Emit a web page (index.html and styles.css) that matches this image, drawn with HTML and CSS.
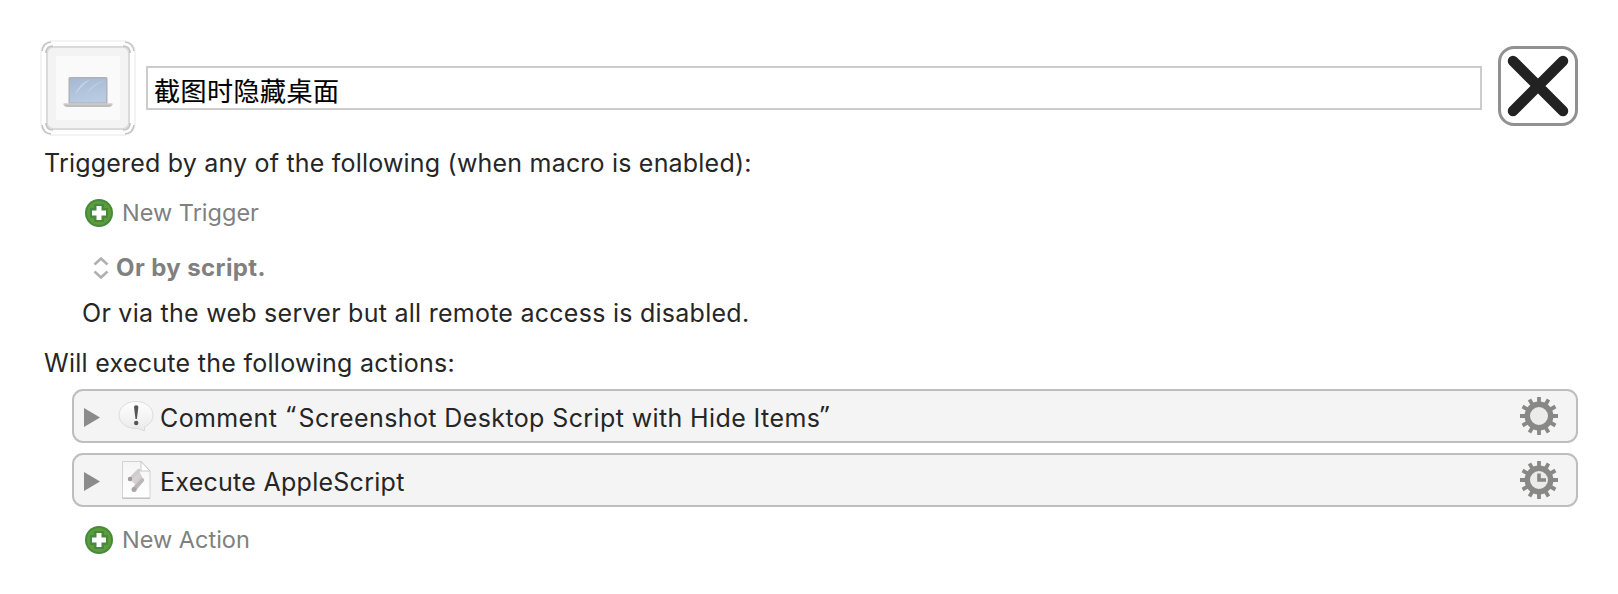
FILE: index.html
```
<!DOCTYPE html>
<html lang="zh-CN">
<head>
<meta charset="utf-8">
<title>Macro Editor</title>
<link rel="stylesheet" href="styles.css">
</head>
<body>
<svg width="0" height="0" class="defs" aria-hidden="true">
  <defs>
    <linearGradient id="screen" x1="0" y1="0" x2="0.3" y2="1"><stop offset="0" stop-color="#a7b8d2"/><stop offset="1" stop-color="#b9cbe2"/></linearGradient>
    <linearGradient id="bubble" x1="0" y1="0" x2="0" y2="1"><stop offset="0" stop-color="#fff"/><stop offset="1" stop-color="#eaeaea"/></linearGradient>
    <linearGradient id="page" x1="0" y1="0" x2="0" y2="1"><stop offset="0" stop-color="#f5f5f5"/><stop offset="1" stop-color="#fff"/></linearGradient>
    <linearGradient id="scroll" x1="0" y1="0" x2="1" y2="1"><stop offset="0" stop-color="#e6e2e3"/><stop offset="1" stop-color="#c2bdbf"/></linearGradient>
    <symbol id="plus" viewBox="0 0 28 28">
      <circle cx="14" cy="14" r="14" fill="#478a3b"/>
      <circle cx="14" cy="14" r="12" fill="#5b9d3d"/>
      <path d="M9 5h10v4h4v10h-4v4H9v-4H5V9h4z" fill="#478a3b"/>
      <path d="M11.500 7h5v4.500h4.500v5h-4.500V21h-5v-4.500H7v-5h4.500z" fill="#fff"/>
    </symbol>
    <symbol id="gear" viewBox="-19 -19 38 38">
      <g stroke="#888987" stroke-width="3.800">
        <path d="M0-19V-10M0 19V10M-19 0H-10M19 0H10"/>
        <path d="M0-19V-10M0 19V10M-19 0H-10M19 0H10" transform="rotate(30)"/>
        <path d="M0-19V-10M0 19V10M-19 0H-10M19 0H10" transform="rotate(60)"/>
      </g>
      <circle r="11.700" fill="#ebebeb" stroke="#888987" stroke-width="5.400"/>
    </symbol>
    <g id="corner" fill="none" stroke-width="1.700" stroke="#c4c4c4">
      <path d="M2 11Q3 3 11 2"/>
      <path d="M6 13Q6 6 13 6"/>
    </g>
  </defs>
</svg>
<main class="editor">
  <header class="header">
    <svg width="96" height="96" viewBox="0 0 96 96">
      <rect x="1" y="1" width="94" height="94" rx="12" fill="#fff" stroke="#f3f3f3" stroke-width="2"/>
      <rect x="7" y="7" width="82" height="82" rx="6" fill="#f3f3f3" stroke="#dadada" stroke-width="2"/>
      <rect x="16" y="16" width="64" height="64" fill="#fafafa"/>
      <use href="#corner"/>
      <use href="#corner" transform="translate(96 0) scale(-1 1)"/>
      <use href="#corner" transform="translate(0 96) scale(1 -1)"/>
      <use href="#corner" transform="translate(96 96) scale(-1 -1)"/>
      <g transform="translate(23 36)">
        <rect x="5.500" y="1" width="39" height="27" rx="1.500" fill="#aeb1b5"/>
        <rect x="7" y="2.500" width="36" height="24" fill="url(#screen)"/>
        <path d="M12 19Q16 7 28 3Q18 10 12 19zM24 17Q29 8 42 4Q31 9 24 17z" fill="#d0dbea" opacity=".7"/>
        <path d="M0.500 27.500h49v1q-1 2.500-4 2.500h-41q-3 0-4-2.500z" fill="#bcbcbc"/>
        <path d="M1 27.500h48v1H1z" fill="#d6d6d6"/>
      </g>
    </svg>
    <div class="name-field">截图时隐藏桌面</div>
    <div class="close">
      <svg width="74" height="74" viewBox="0 0 74 74"><path d="M12 12L62 62M62 12L12 62" stroke="#222" stroke-width="10.500" stroke-linecap="round"/></svg>
    </div>
  </header>
  <section class="triggers">
    <div class="label t-trig">Triggered by any of the following (when macro is enabled):</div>
    <div class="add-row">
      <svg width="28" height="28"><use href="#plus"/></svg>
      <span class="add-text">New Trigger</span>
    </div>
    <div class="script-row">
      <svg width="16" height="24" viewBox="0 0 16 24" fill="none" stroke="#b0b0b0" stroke-width="2.600"><path d="M1.500 8.500L8 2.500L14.500 8.500M1.500 15.500L8 21.500L14.500 15.500"/></svg>
      <span class="script-text">Or by script.</span>
    </div>
    <div class="label web">Or via the web server but all remote access is disabled.</div>
  </section>
  <section class="actions">
    <div class="label t-will">Will execute the following actions:</div>
    <div class="action">
      <svg class="disclosure" width="16" height="19" viewBox="0 0 16 19"><path d="M0 0L16 9.500L0 19z" fill="#8b8b8b"/></svg>
      <svg class="kind" width="36" height="38" viewBox="0 0 36 38">
        <path d="M18 4.500C27.500 4.500 35 10.500 35 18C35 23 32 27.500 26.500 29.700L26.500 34L20 31.400C9 32.300 1 26 1 18C1 10.500 8.500 4.500 18 4.500z" fill="url(#bubble)" stroke="#dcdcdc" stroke-width="1"/>
        <path d="M16 10Q16 8.300 18.200 8.300Q20.400 8.300 20.400 10L18.900 22H17.500z" fill="#555"/>
        <circle cx="18.200" cy="26" r="2.200" fill="#555"/>
      </svg>
      <span class="action-title c-title">Comment <span class="quote open">“</span>Screenshot Desktop Script with Hide Items<span class="quote">”</span></span>
      <svg class="gear" width="38" height="38"><use href="#gear"/></svg>
    </div>
    <div class="action">
      <svg class="disclosure" width="16" height="19" viewBox="0 0 16 19"><path d="M0 0L16 9.500L0 19z" fill="#8b8b8b"/></svg>
      <svg class="kind" width="36" height="38" viewBox="0 0 36 38">
        <path d="M4.500 0.500H23L32 10V37.200H4.500z" fill="url(#page)" stroke="#d2d2d2"/>
        <path d="M4.500 37.200H32" stroke="#b4b4b4"/>
        <path d="M23 0.500V10H32z" fill="#fff" stroke="#bbb" stroke-width=".8"/>
        <path d="M12 16L20.500 7.500Q23 7.500 21.500 11L26 19.500L18 30L14.500 28L17 23L13 20z" fill="url(#scroll)"/>
        <path d="M12.500 18L21 9.500" stroke="#d0cccd" stroke-width="3.500" stroke-linecap="round"/>
        <path d="M16.500 27.500L24.500 19" stroke="#bbb6b8" stroke-width="3.500" stroke-linecap="round"/>
        <circle cx="12" cy="18" r="2.200" fill="#9f999b"/><circle cx="16" cy="28.500" r="2.500" fill="#aaa5a7"/>
      </svg>
      <span class="action-title e-title">Execute AppleScript</span>
      <svg class="gear" width="38" height="38" viewBox="0 0 38 38"><use href="#gear"/><path d="M19 12.500V19H26" fill="none" stroke="#888987" stroke-width="3.600"/></svg>
    </div>
    <div class="add-row add-action">
      <svg width="28" height="28"><use href="#plus"/></svg>
      <span class="add-text">New Action</span>
    </div>
  </section>
</main>
</body>
</html>
```
FILE: styles.css
```
* { box-sizing: border-box; }
body {
  margin: 0;
  background: #fff;
  color: #262626;
  font-family: Inter, "Noto Sans CJK SC", sans-serif;
  font-size: 25px;
}
svg { display: block; flex: none; }
.defs { position: absolute; }
.editor { padding: 40px 40px 0; height: 594px; white-space: nowrap; }
.header { display: flex; align-items: flex-start; height: 96px; }
.name-field {
  flex: 1; height: 44px; margin: 26px 16px 0 10px; padding-left: 6px;
  border: 2px solid #ccc;
  color: #000; font-family: "Noto Sans CJK SC", sans-serif;
  font-size: 26px; line-height: 43px; letter-spacing: .5px;
  -webkit-text-stroke: .15px #000;
}
.close {
  width: 80px; height: 80px; margin: 6px 0 0;
  border: 3px solid #919191; border-radius: 16px;
}
.label { line-height: 30px; }
.triggers { padding-top: 12px; }
.triggers .label, .t-will { padding-left: 4px; }
.t-trig { letter-spacing: .2px; }
.add-row { display: flex; align-items: center; height: 28px; padding-left: 45px; margin-top: 21px; gap: 9px; }
.add-text { color: #808080; font-size: 23.5px; line-height: 28px; }
.script-row { display: flex; align-items: center; height: 28px; margin-top: 27px; padding-left: 53px; gap: 7px; }
.script-text { color: #808080; font-size: 24px; font-weight: 700; line-height: 28px; letter-spacing: .4px; }
.triggers .web { margin-top: 16px; padding-left: 42px; letter-spacing: .26px; }
.t-will { margin: 20px 0 11px; letter-spacing: .28px; }
.action {
  display: flex; align-items: center; height: 54px;
  margin: 0 0 10px 32px; padding: 0 18px 0 10px;
  border: 2px solid #bebebe; border-radius: 11px; background: #f4f4f4;
}
.disclosure { margin-top: 2px; }
.kind { margin: 0 6px 0 18px; }
.action-title { flex: 1; line-height: 30px; padding-top: 4px; }
.c-title { letter-spacing: .39px; }
.quote { font-family: "Noto Sans", sans-serif; line-height: 0; vertical-align: 3px; }
.open { margin: 0 2.5px 0 2px; }
.e-title { letter-spacing: .27px; }
.add-action { margin-top: 19px; }
```
